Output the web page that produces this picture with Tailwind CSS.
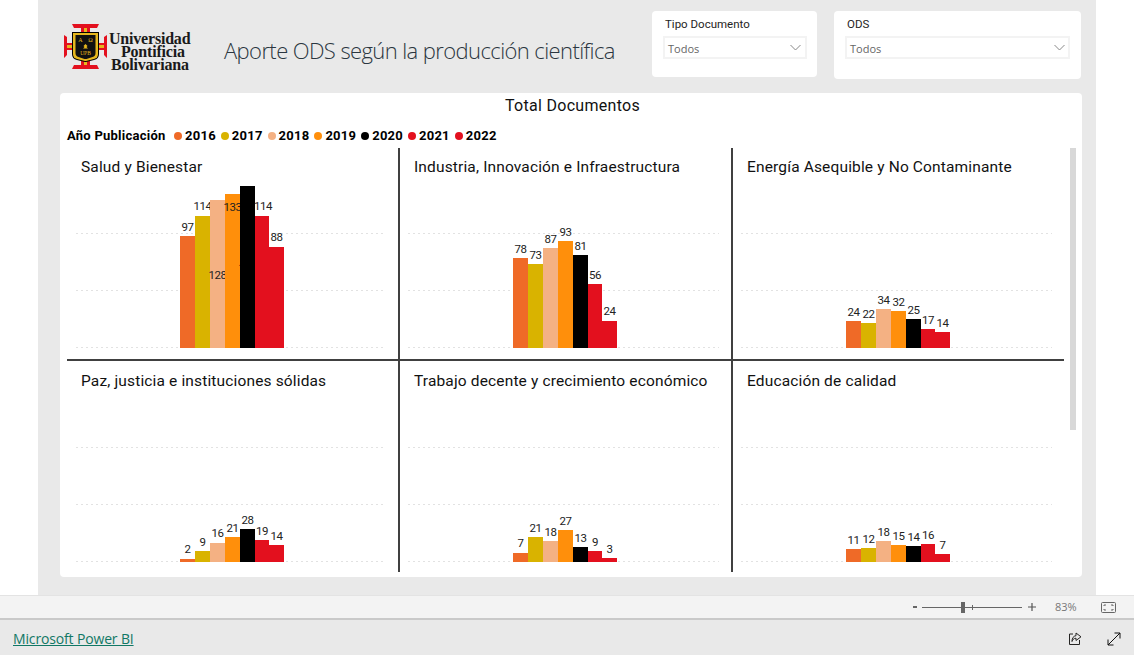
<!DOCTYPE html>
<html lang="es">
<head>
<meta charset="utf-8">
<title>Aporte ODS</title>
<script src="https://cdn.jsdelivr.net/npm/@tailwindcss/browser@4"></script>
</head>
<body class="bg-white">
<div class="flex flex-col w-[1134px] h-[655px] overflow-hidden font-['Roboto',sans-serif] text-[#111]">
  <main class="ml-[38px] w-[1058px] h-[595px] bg-[#e9e9e9] pl-[22px] flex flex-col shrink-0">
    <header class="flex h-[93px] shrink-0">
      <div class="flex w-[160px] pl-[4px] pt-[23px] gap-[2px]">
        <svg class="w-[43px] h-[47px] shrink-0" viewBox="0 0 43 47">
          <path fill="#e3101e" d="M8 1h27l-2 4h-7v5h-9V5h-7zM0 12l3 2v6h6v7H3v5l-3 3zM43 12l-3 2v6h-6v7h6v5l3 3zM17 37h9v5h7l2 4H8l2-4h7z"/>
          <rect x="20" y="5" width="3" height="5" fill="#e6b71e"/>
          <rect x="3" y="22" width="6" height="3" fill="#e6b71e"/>
          <rect x="34" y="22" width="6" height="3" fill="#e6b71e"/>
          <rect x="20" y="37" width="3" height="5" fill="#e6b71e"/>
          <path fill="#000" d="M8 9h27v22q0 5-5 6l-8 2h-1l-8-2q-5-1-5-6z"/>
          <path fill="#e6b71e" d="M9 10h25v21q0 4-4 5l-8 2h-1l-8-2q-4-1-4-5z"/>
          <path fill="#111" d="M11.500 12h20v18q0 3-3 4l-6 2h-2l-6-2q-3-1-3-4z"/>
          <text x="16.500" y="19" font-size="6" fill="#e6b71e" text-anchor="middle" font-family="Liberation Serif">Α</text>
          <text x="26.500" y="19" font-size="6" fill="#e6b71e" text-anchor="middle" font-family="Liberation Serif">Ω</text>
          <text x="21.500" y="32" font-size="5.500" fill="#e6b71e" text-anchor="middle" font-family="Liberation Serif">UPB</text>
          <path fill="#e6b71e" d="M21.500 21l2 2-1 1 1.500 1.500h-5l1.500-1.500-1-1z"/>
        </svg>
        <div class="font-['Liberation_Serif',serif] font-bold text-[16px] leading-[13px] tracking-[-0.2px] text-[#1a1a1a] pt-[9px] w-[90px] shrink-0">
          <div>Universidad</div>
          <div class="pl-[12px]">Pontificia</div>
          <div class="pl-[2px]">Bolivariana</div>
        </div>
      </div>
      <h1 class="ml-[4px] pt-[35px] w-[428px] shrink-0 font-['Open_Sans',sans-serif] font-light text-[22px] leading-[30px] tracking-[-0.6px] text-[#2b3640] whitespace-nowrap">Aporte ODS según la producción científica</h1>
      <section class="w-[165px] h-[66px] mt-[11px] bg-white rounded-[4px] shrink-0 pt-[6px] pl-[11px] pr-[10px]">
        <div class="pl-[3px] text-[11.500px] leading-[14px] text-[#252423] -ml-[1px]">Tipo Documento</div>
        <div class="mt-[5px] h-[23px] border-2 border-[#f3f3f3] flex items-center justify-between pl-[3px] pr-[4px]">
          <span class="pt-[4px] font-['Open_Sans',sans-serif] text-[11px] text-[#666]">Todos</span>
          <svg class="w-[11px] h-[7px]" viewBox="0 0 11 7" fill="none" stroke="#888" stroke-width="1"><path d="M.5 1l5 5 5-5"/></svg>
        </div>
      </section>
      <section class="w-[247px] h-[68px] mt-[11px] ml-[17px] bg-white rounded-[4px] shrink-0 pt-[6px] pl-[11px] pr-[11px]">
        <div class="pl-[2px] text-[11.500px] leading-[14px] text-[#252423]">ODS</div>
        <div class="mt-[5px] h-[23px] border-2 border-[#f3f3f3] flex items-center justify-between pl-[3px] pr-[3px]">
          <span class="pt-[4px] font-['Open_Sans',sans-serif] text-[11px] text-[#666]">Todos</span>
          <svg class="w-[11px] h-[7px]" viewBox="0 0 11 7" fill="none" stroke="#888" stroke-width="1"><path d="M.5 1l5 5 5-5"/></svg>
        </div>
      </section>
    </header>
    <section class="relative w-[1022px] h-[484px] bg-white rounded-[4px] shrink-0 pl-[7px]">
      <div class="h-[24px] pt-[3px] pr-[4px] text-center text-[16px] leading-[20px] tracking-[0.3px] text-[#111]">Total Documentos</div>
      <div class="h-[31px] flex items-center pt-[10px] pb-[4px] text-[13px] font-bold tracking-[0.25px] text-black whitespace-nowrap">
        <span class="w-[107px] shrink-0">Año Publicación</span>
        <span class="w-[46.800px] flex items-center gap-[3px]"><i class="w-[8px] h-[8px] rounded-full bg-[#ef6a27]"></i>2016</span>
        <span class="w-[46.800px] flex items-center gap-[3px]"><i class="w-[8px] h-[8px] rounded-full bg-[#d9b300]"></i>2017</span>
        <span class="w-[46.800px] flex items-center gap-[3px]"><i class="w-[8px] h-[8px] rounded-full bg-[#f4b183]"></i>2018</span>
        <span class="w-[46.800px] flex items-center gap-[3px]"><i class="w-[8px] h-[8px] rounded-full bg-[#ff8f0b]"></i>2019</span>
        <span class="w-[46.800px] flex items-center gap-[3px]"><i class="w-[8px] h-[8px] rounded-full bg-black"></i>2020</span>
        <span class="w-[46.800px] flex items-center gap-[3px]"><i class="w-[8px] h-[8px] rounded-full bg-[#e3101e]"></i>2021</span>
        <span class="w-[46.800px] flex items-center gap-[3px]"><i class="w-[8px] h-[8px] rounded-full bg-[#e3101e]"></i>2022</span>
      </div>
      <div class="w-[997px] grid grid-cols-[333px_333px_331px] grid-rows-[213px_211px]">

        <!-- Salud y Bienestar -->
        <article class="border-r-2 border-b-2 border-[#404040] flex flex-col justify-between pb-[11px]">
          <h2 class="pl-[14px] pt-[9px] text-[15.500px] leading-[20px] tracking-[0.15px] font-normal">Salud y Bienestar</h2>
          <div class="relative h-[115px]">
            <div class="absolute left-[9px] right-[12px] inset-y-0 flex flex-col justify-between"><i class="block h-px bg-[repeating-linear-gradient(90deg,#e2e2e2_0_2px,transparent_2px_5px)]"></i><i class="block h-px bg-[repeating-linear-gradient(90deg,#e2e2e2_0_2px,transparent_2px_5px)]"></i><i class="block h-px bg-[repeating-linear-gradient(90deg,#e2e2e2_0_2px,transparent_2px_5px)]"></i></div>
            <div class="absolute bottom-0 left-[113px] flex items-end text-[11.500px] leading-[14px] tracking-[-0.5px] text-[#222]">
              <div class="relative w-[15px] h-[112px] bg-[#ef6a27]"><span class="absolute bottom-full left-1/2 -translate-x-1/2 mb-[2px]">97</span></div>
              <div class="relative w-[15px] h-[132px] bg-[#d9b300]"><span class="absolute bottom-full left-1/2 -translate-x-1/2 mb-[3px]">114</span></div>
              <div class="relative w-[15px] h-[148px] bg-[#f4b183]"><span class="absolute top-[68px] left-1/2 -translate-x-1/2">128</span></div>
              <div class="relative w-[15px] h-[154px] bg-[#ff8f0b]"><span class="absolute top-[6px] left-1/2 -translate-x-1/2">133</span></div>
              <div class="relative w-[15px] h-[162px] bg-black"><span class="absolute top-[75px] left-1/2 -translate-x-1/2 text-black">140</span></div>
              <div class="relative w-[14px] h-[132px] bg-[#e3101e]"><span class="absolute bottom-full left-1/2 -translate-x-1/2 ml-[1px] mb-[3px]">114</span></div>
              <div class="relative w-[15px] h-[101px] bg-[#e3101e]"><span class="absolute bottom-full left-1/2 -translate-x-1/2 mb-[3px]">88</span></div>
            </div>
          </div>
        </article>

        <!-- Industria -->
        <article class="border-r-2 border-b-2 border-[#404040] flex flex-col justify-between pb-[11px]">
          <h2 class="pl-[14px] pt-[9px] text-[15.500px] leading-[20px] tracking-[0.15px] font-normal whitespace-nowrap">Industria, Innovación e Infraestructura</h2>
          <div class="relative h-[115px]">
            <div class="absolute left-[8px] right-[12px] inset-y-0 flex flex-col justify-between"><i class="block h-px bg-[repeating-linear-gradient(90deg,#e2e2e2_0_2px,transparent_2px_5px)]"></i><i class="block h-px bg-[repeating-linear-gradient(90deg,#e2e2e2_0_2px,transparent_2px_5px)]"></i><i class="block h-px bg-[repeating-linear-gradient(90deg,#e2e2e2_0_2px,transparent_2px_5px)]"></i></div>
            <div class="absolute bottom-0 left-[113px] flex items-end text-[11.500px] leading-[14px] tracking-[-0.5px] text-[#222]">
              <div class="relative w-[15px] h-[90px] bg-[#ef6a27]"><span class="absolute bottom-full left-1/2 -translate-x-1/2 mb-[2px]">78</span></div>
              <div class="relative w-[15px] h-[84px] bg-[#d9b300]"><span class="absolute bottom-full left-1/2 -translate-x-1/2 mb-[2px]">73</span></div>
              <div class="relative w-[15px] h-[100px] bg-[#f4b183]"><span class="absolute bottom-full left-1/2 -translate-x-1/2 mb-[2px]">87</span></div>
              <div class="relative w-[15px] h-[107px] bg-[#ff8f0b]"><span class="absolute bottom-full left-1/2 -translate-x-1/2 mb-[2px]">93</span></div>
              <div class="relative w-[15px] h-[93px] bg-black"><span class="absolute bottom-full left-1/2 -translate-x-1/2 mb-[2px]">81</span></div>
              <div class="relative w-[14px] h-[64px] bg-[#e3101e]"><span class="absolute bottom-full left-1/2 -translate-x-1/2 mb-[2px]">56</span></div>
              <div class="relative w-[15px] h-[27px] bg-[#e3101e]"><span class="absolute bottom-full left-1/2 -translate-x-1/2 mb-[3px]">24</span></div>
            </div>
          </div>
        </article>

        <!-- Energia -->
        <article class="border-b-2 border-[#404040] flex flex-col justify-between pb-[11px]">
          <h2 class="pl-[14px] pt-[9px] text-[15.500px] leading-[20px] tracking-[0.15px] font-normal whitespace-nowrap">Energía Asequible y No Contaminante</h2>
          <div class="relative h-[115px]">
            <div class="absolute left-[8px] right-[12px] inset-y-0 flex flex-col justify-between"><i class="block h-px bg-[repeating-linear-gradient(90deg,#e2e2e2_0_2px,transparent_2px_5px)]"></i><i class="block h-px bg-[repeating-linear-gradient(90deg,#e2e2e2_0_2px,transparent_2px_5px)]"></i><i class="block h-px bg-[repeating-linear-gradient(90deg,#e2e2e2_0_2px,transparent_2px_5px)]"></i></div>
            <div class="absolute bottom-0 left-[113px] flex items-end text-[11.500px] leading-[14px] tracking-[-0.5px] text-[#222]">
              <div class="relative w-[15px] h-[27px] bg-[#ef6a27]"><span class="absolute bottom-full left-1/2 -translate-x-1/2 mb-[2px]">24</span></div>
              <div class="relative w-[15px] h-[25px] bg-[#d9b300]"><span class="absolute bottom-full left-1/2 -translate-x-1/2 mb-[2px]">22</span></div>
              <div class="relative w-[15px] h-[39px] bg-[#f4b183]"><span class="absolute bottom-full left-1/2 -translate-x-1/2 mb-[2px]">34</span></div>
              <div class="relative w-[15px] h-[37px] bg-[#ff8f0b]"><span class="absolute bottom-full left-1/2 -translate-x-1/2 mb-[2px]">32</span></div>
              <div class="relative w-[15px] h-[29px] bg-black"><span class="absolute bottom-full left-1/2 -translate-x-1/2 mb-[2px]">25</span></div>
              <div class="relative w-[14px] h-[19px] bg-[#e3101e]"><span class="absolute bottom-full left-1/2 -translate-x-1/2 mb-[2px]">17</span></div>
              <div class="relative w-[15px] h-[16px] bg-[#e3101e]"><span class="absolute bottom-full left-1/2 -translate-x-1/2 mb-[2px]">14</span></div>
            </div>
          </div>
        </article>

        <!-- Paz -->
        <article class="border-r-2 border-[#404040] flex flex-col justify-between pb-[10px]">
          <h2 class="pl-[14px] pt-[10px] text-[15.500px] leading-[20px] tracking-[0.15px] font-normal">Paz, justicia e instituciones sólidas</h2>
          <div class="relative h-[115px]">
            <div class="absolute left-[9px] right-[12px] inset-y-0 flex flex-col justify-between"><i class="block h-px bg-[repeating-linear-gradient(90deg,#e2e2e2_0_2px,transparent_2px_5px)]"></i><i class="block h-px bg-[repeating-linear-gradient(90deg,#e2e2e2_0_2px,transparent_2px_5px)]"></i><i class="block h-px bg-[repeating-linear-gradient(90deg,#e2e2e2_0_2px,transparent_2px_5px)]"></i></div>
            <div class="absolute bottom-0 left-[113px] flex items-end text-[11.500px] leading-[14px] tracking-[-0.5px] text-[#222]">
              <div class="relative w-[15px] h-[3px] bg-[#ef6a27]"><span class="absolute bottom-full left-1/2 -translate-x-1/2 mb-[3px]">2</span></div>
              <div class="relative w-[15px] h-[11px] bg-[#d9b300]"><span class="absolute bottom-full left-1/2 -translate-x-1/2 mb-[2px]">9</span></div>
              <div class="relative w-[15px] h-[19px] bg-[#f4b183]"><span class="absolute bottom-full left-1/2 -translate-x-1/2 mb-[3px]">16</span></div>
              <div class="relative w-[15px] h-[25px] bg-[#ff8f0b]"><span class="absolute bottom-full left-1/2 -translate-x-1/2 mb-[2px]">21</span></div>
              <div class="relative w-[15px] h-[33px] bg-black"><span class="absolute bottom-full left-1/2 -translate-x-1/2 mb-[2px]">28</span></div>
              <div class="relative w-[14px] h-[22px] bg-[#e3101e]"><span class="absolute bottom-full left-1/2 -translate-x-1/2 mb-[2px]">19</span></div>
              <div class="relative w-[15px] h-[17px] bg-[#e3101e]"><span class="absolute bottom-full left-1/2 -translate-x-1/2 mb-[2px]">14</span></div>
            </div>
          </div>
        </article>

        <!-- Trabajo -->
        <article class="border-r-2 border-[#404040] flex flex-col justify-between pb-[10px]">
          <h2 class="pl-[14px] pt-[10px] text-[15.500px] leading-[20px] tracking-[0.15px] font-normal whitespace-nowrap">Trabajo decente y crecimiento económico</h2>
          <div class="relative h-[115px]">
            <div class="absolute left-[8px] right-[12px] inset-y-0 flex flex-col justify-between"><i class="block h-px bg-[repeating-linear-gradient(90deg,#e2e2e2_0_2px,transparent_2px_5px)]"></i><i class="block h-px bg-[repeating-linear-gradient(90deg,#e2e2e2_0_2px,transparent_2px_5px)]"></i><i class="block h-px bg-[repeating-linear-gradient(90deg,#e2e2e2_0_2px,transparent_2px_5px)]"></i></div>
            <div class="absolute bottom-0 left-[113px] flex items-end text-[11.500px] leading-[14px] tracking-[-0.5px] text-[#222]">
              <div class="relative w-[15px] h-[9px] bg-[#ef6a27]"><span class="absolute bottom-full left-1/2 -translate-x-1/2 mb-[3px]">7</span></div>
              <div class="relative w-[15px] h-[25px] bg-[#d9b300]"><span class="absolute bottom-full left-1/2 -translate-x-1/2 mb-[2px]">21</span></div>
              <div class="relative w-[15px] h-[21px] bg-[#f4b183]"><span class="absolute bottom-full left-1/2 -translate-x-1/2 mb-[2px]">18</span></div>
              <div class="relative w-[15px] h-[32px] bg-[#ff8f0b]"><span class="absolute bottom-full left-1/2 -translate-x-1/2 mb-[2px]">27</span></div>
              <div class="relative w-[15px] h-[15px] bg-black"><span class="absolute bottom-full left-1/2 -translate-x-1/2 mb-[2px]">13</span></div>
              <div class="relative w-[14px] h-[11px] bg-[#e3101e]"><span class="absolute bottom-full left-1/2 -translate-x-1/2 mb-[2px]">9</span></div>
              <div class="relative w-[15px] h-[4px] bg-[#e3101e]"><span class="absolute bottom-full left-1/2 -translate-x-1/2 mb-[2px]">3</span></div>
            </div>
          </div>
        </article>

        <!-- Educacion -->
        <article class="flex flex-col justify-between pb-[10px]">
          <h2 class="pl-[14px] pt-[10px] text-[15.500px] leading-[20px] tracking-[0.15px] font-normal">Educación de calidad</h2>
          <div class="relative h-[115px]">
            <div class="absolute left-[8px] right-[12px] inset-y-0 flex flex-col justify-between"><i class="block h-px bg-[repeating-linear-gradient(90deg,#e2e2e2_0_2px,transparent_2px_5px)]"></i><i class="block h-px bg-[repeating-linear-gradient(90deg,#e2e2e2_0_2px,transparent_2px_5px)]"></i><i class="block h-px bg-[repeating-linear-gradient(90deg,#e2e2e2_0_2px,transparent_2px_5px)]"></i></div>
            <div class="absolute bottom-0 left-[113px] flex items-end text-[11.500px] leading-[14px] tracking-[-0.5px] text-[#222]">
              <div class="relative w-[15px] h-[13px] bg-[#ef6a27]"><span class="absolute bottom-full left-1/2 -translate-x-1/2 mb-[2px]">11</span></div>
              <div class="relative w-[15px] h-[14px] bg-[#d9b300]"><span class="absolute bottom-full left-1/2 -translate-x-1/2 mb-[2px]">12</span></div>
              <div class="relative w-[15px] h-[21px] bg-[#f4b183]"><span class="absolute bottom-full left-1/2 -translate-x-1/2 mb-[2px]">18</span></div>
              <div class="relative w-[15px] h-[17px] bg-[#ff8f0b]"><span class="absolute bottom-full left-1/2 -translate-x-1/2 mb-[2px]">15</span></div>
              <div class="relative w-[15px] h-[16px] bg-black"><span class="absolute bottom-full left-1/2 -translate-x-1/2 mb-[2px]">14</span></div>
              <div class="relative w-[14px] h-[18px] bg-[#e3101e]"><span class="absolute bottom-full left-1/2 -translate-x-1/2 mb-[2px]">16</span></div>
              <div class="relative w-[15px] h-[8px] bg-[#e3101e]"><span class="absolute bottom-full left-1/2 -translate-x-1/2 mb-[2px]">7</span></div>
            </div>
          </div>
        </article>
      </div>
      <div class="absolute left-[1010px] top-[55px] w-[6px] h-[282px] bg-[#d8d8d8]"></div>
    </section>
  </main>

  <div class="h-[23px] shrink-0 bg-[#f3f3f3] border-t border-[#e3e3e3] flex items-center justify-end pr-[18px] font-['Open_Sans',sans-serif]">
    <span class="w-[4px] h-[2px] bg-[#666]"></span>
    <div class="relative ml-[5px] w-[100px] h-[1px] bg-[#666]">
      <span class="absolute left-[39px] -top-[5px] w-[4px] h-[11px] bg-[#666]"></span>
      <span class="absolute left-[50px] -top-[2px] w-[1px] h-[5px] bg-[#666]"></span>
    </div>
    <svg class="ml-[6px] w-[8px] h-[8px]" viewBox="0 0 8 8" stroke="#555" stroke-width="1.200"><path d="M0 4h8M4 0v8"/></svg>
    <span class="ml-[19px] w-[28px] text-[11px] text-[#777]">83%</span>
    <svg class="ml-[18px] w-[15px] h-[11px]" viewBox="0 0 15 11" fill="none" stroke="#666" stroke-width="1"><rect x=".5" y=".5" width="14" height="10" rx="1"/><path d="M3 4V3h2M10 3h2v1M3 7v1h2M10 8h2V7"/></svg>
  </div>
  <footer class="flex-1 bg-[#e9e9e9] border-t-2 border-[#c9c9c9] flex items-center pt-[2px] pl-[13px] pr-[13px] font-['Open_Sans',sans-serif]">
    <a href="#" class="text-[14px] tracking-[-0.15px] text-[#117865] underline">Microsoft Power BI</a>
    <svg class="ml-auto w-[14px] h-[14px]" viewBox="0 0 14 14" fill="none" stroke="#252423" stroke-width="1"><path d="M5 2H1.500v10.500h10V8"/><path d="M8 1l5 3.800-5 3.700V6.200C6 6.200 4.500 7.500 4 9.500c0-3.500 1.500-5.500 4-5.800z"/></svg>
    <svg class="ml-[25px] w-[14px] h-[14px]" viewBox="0 0 14 14" fill="none" stroke="#111" stroke-width="1"><path d="M1 13L13 1M7.500 1H13v5.500M1 7.500V13h5.500"/></svg>
  </footer>
</div>
</body>
</html>
